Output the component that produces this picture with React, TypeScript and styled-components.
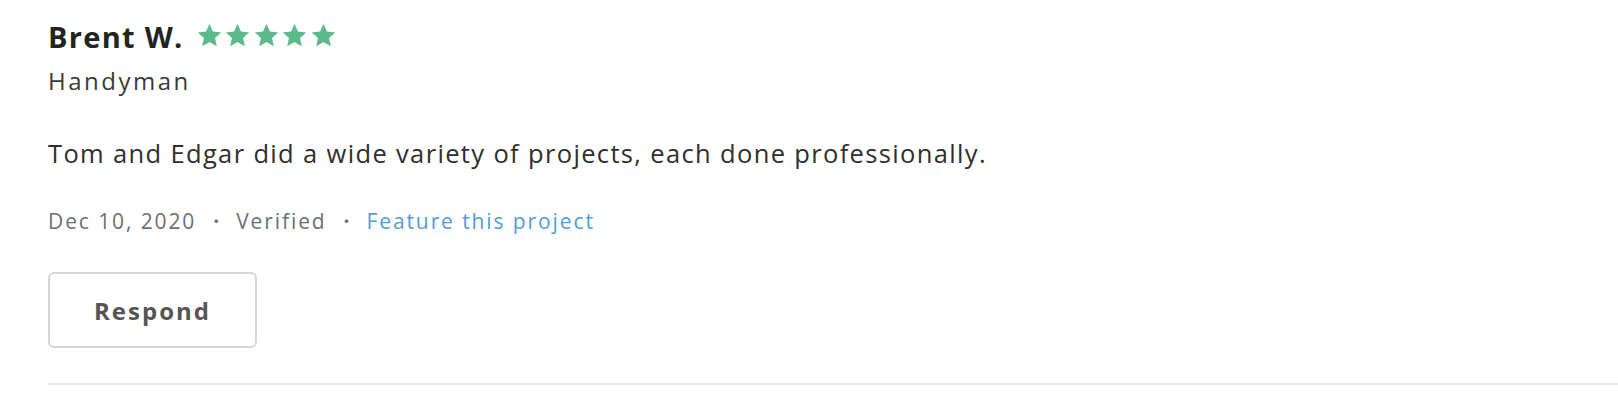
import styled, { createGlobalStyle } from 'styled-components';

const GlobalStyle = createGlobalStyle`
  body {
    margin: 0;
    background: #ffffff;
    font-family: "Open Sans", "Liberation Sans", sans-serif;
  }
`;

function Star() {
  return (
    <svg width="25" height="25" viewBox="0 0 24 24">
      <path
        d="M12 1l3.3 7.2 7.9.8-5.9 5.4 1.7 7.8L12 18.2l-7 4 1.7-7.8L.8 9l7.9-.8z"
        fill="#5bb98b"
      />
    </svg>
  );
}

function App() {
  return (
    <>
      <GlobalStyle />
      <Review>
        <NameRow>
          <Name>Brent W.</Name>
          <Stars>
            {[0, 1, 2, 3, 4].map((i) => (
              <Star key={i} />
            ))}
          </Stars>
        </NameRow>
        <Service>Handyman</Service>
        <Body>Tom and Edgar did a wide variety of projects, each done professionally.</Body>
        <Meta>
          <span>Dec 10, 2020</span>
          <Dot>·</Dot>
          <span>Verified</span>
          <Dot>·</Dot>
          <FeatureLink>Feature this project</FeatureLink>
        </Meta>
        <RespondButton>Respond</RespondButton>
      </Review>
    </>
  );
}

export default App;

export const Review = styled.div`
  margin-left: 48px;
  padding: 19px 0 35px;
  border-bottom: 2px solid #e8e8e8;
`;

export const NameRow = styled.div`
  display: flex;
  align-items: center;
  gap: 13px;
  height: 36px;
`;

export const Name = styled.div`
  font-size: 29px;
  font-weight: 700;
  letter-spacing: 1.3px;
  color: #232323;
  line-height: 36px;
`;

export const Stars = styled.div`
  display: flex;
  gap: 3.5px;
  margin-top: -3px;
`;

export const Service = styled.div`
  margin-top: 11px;
  font-size: 24px;
  letter-spacing: 2.5px;
  line-height: 30px;
  color: #3a3a3a;
`;

export const Body = styled.p`
  margin: 41px 0 0;
  font-size: 25.5px;
  letter-spacing: 1.35px;
  line-height: 32px;
  color: #2f2f2f;
`;

export const Meta = styled.div`
  display: flex;
  align-items: center;
  margin-top: 38px;
  font-size: 21px;
  letter-spacing: 1.9px;
  line-height: 28px;
  color: #6b6f73;
`;

export const Dot = styled.span`
  padding: 0 15px 0 17px;
  font-weight: 700;
`;

export const FeatureLink = styled.a`
  color: #4f9fd4;
  cursor: pointer;
`;

export const RespondButton = styled.button`
  display: block;
  margin-top: 37px;
  width: 209px;
  height: 76px;
  background: #ffffff;
  border: 2px solid #d5d5d5;
  border-radius: 6px;
  font-family: "Open Sans", "Liberation Sans", sans-serif;
  font-size: 24px;
  font-weight: 700;
  letter-spacing: 2px;
  color: #555555;
  cursor: pointer;
`;
